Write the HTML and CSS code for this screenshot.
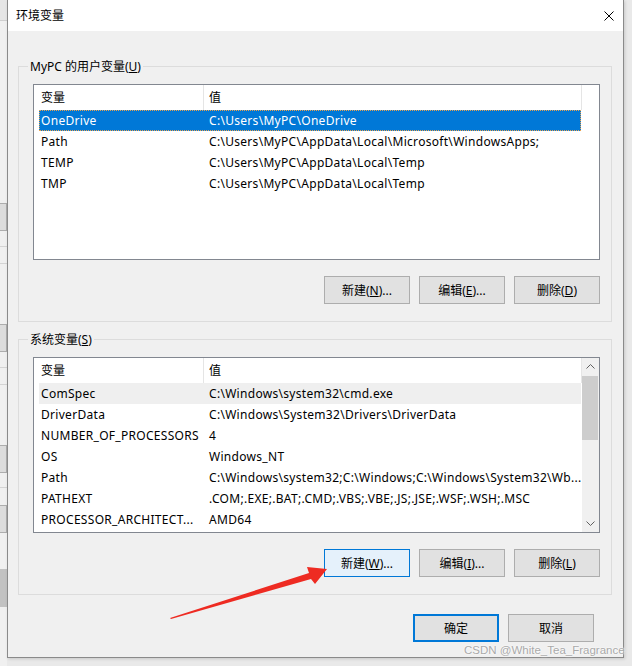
FILE: index.html
```html
<!DOCTYPE html>
<html lang="zh-CN">
<head>
<meta charset="utf-8">
<title>环境变量</title>
<link rel="stylesheet" href="styles.css">
</head>
<body>
<div class="desk">
  <div class="behind">
    <div class="bh-top"></div>
    <div class="bh-btn b1"></div>
    <div class="bh-line l1"></div>
    <div class="bh-line l2"></div>
    <div class="bh-btn b2"></div>
    <div class="bh-line l3"></div>
    <div class="bh-line l4"></div>
    <div class="bh-btn b3"></div>
    <div class="bh-line l5"></div>
    <div class="bh-btn b4"></div>
    <div class="bh-dark"></div>
  </div>

  <div class="dialog">
    <div class="titlebar">
      <span class="title">环境变量</span>
      <svg class="close" width="10" height="10" viewBox="0 0 10 10"><path d="M0.5 0.5L9.5 9.5M9.5 0.5L0.5 9.5" stroke="#000" stroke-width="1" fill="none"/></svg>
    </div>
    <div class="body">
      <div class="group">
        <span class="legend">MyPC 的用户变量(<u>U</u>)</span>
        <div class="list">
          <div class="list-main">
            <div class="head"><div class="hc c1">变量</div><div class="hc c2">值</div></div>
            <div class="row selected"><div class="cell c1">OneDrive</div><div class="cell c2">C:\Users\MyPC\OneDrive</div></div>
            <div class="row"><div class="cell c1">Path</div><div class="cell c2">C:\Users\MyPC\AppData\Local\Microsoft\WindowsApps;</div></div>
            <div class="row"><div class="cell c1">TEMP</div><div class="cell c2">C:\Users\MyPC\AppData\Local\Temp</div></div>
            <div class="row"><div class="cell c1">TMP</div><div class="cell c2">C:\Users\MyPC\AppData\Local\Temp</div></div>
          </div>
        </div>
        <div class="btns">
          <div class="btn">新建(<u>N</u>)...</div>
          <div class="btn">编辑(<u>E</u>)...</div>
          <div class="btn">删除(<u>D</u>)</div>
        </div>
      </div>

      <div class="group g2">
        <span class="legend">系统变量(<u>S</u>)</span>
        <div class="list">
          <div class="list-main">
            <div class="head"><div class="hc c1">变量</div><div class="hc c2">值</div></div>
            <div class="row hover"><div class="cell c1">ComSpec</div><div class="cell c2">C:\Windows\system32\cmd.exe</div></div>
            <div class="row"><div class="cell c1">DriverData</div><div class="cell c2">C:\Windows\System32\Drivers\DriverData</div></div>
            <div class="row"><div class="cell c1">NUMBER_OF_PROCESSORS</div><div class="cell c2">4</div></div>
            <div class="row"><div class="cell c1">OS</div><div class="cell c2">Windows_NT</div></div>
            <div class="row"><div class="cell c1">Path</div><div class="cell c2">C:\Windows\system32;C:\Windows;C:\Windows\System32\Wb...</div></div>
            <div class="row"><div class="cell c1">PATHEXT</div><div class="cell c2">.COM;.EXE;.BAT;.CMD;.VBS;.VBE;.JS;.JSE;.WSF;.WSH;.MSC</div></div>
            <div class="row"><div class="cell c1">PROCESSOR_ARCHITECT...</div><div class="cell c2">AMD64</div></div>
          </div>
          <div class="scrollbar">
            <div class="sb-arrow"><svg width="9" height="5" viewBox="0 0 9 5"><path d="M0.5 4.5L4.5 0.5L8.5 4.5" stroke="#606060" fill="none"/></svg></div>
            <div class="sb-thumb"></div>
            <div class="sb-space"></div>
            <div class="sb-arrow"><svg width="9" height="5" viewBox="0 0 9 5"><path d="M0.5 0.5L4.5 4.5L8.5 0.5" stroke="#606060" fill="none"/></svg></div>
          </div>
        </div>
        <div class="btns">
          <div class="btn focus">新建(<u>W</u>)...</div>
          <div class="btn">编辑(<u>I</u>)...</div>
          <div class="btn">删除(<u>L</u>)</div>
        </div>
      </div>

      <div class="footer">
        <div class="btn default">确定</div>
        <div class="btn">取消</div>
      </div>
    </div>
  </div>

  <svg class="arrow" width="632" height="666" viewBox="0 0 632 666">
    <polygon points="170,618 309,573 307,567 327,569 315,584 311,579 171,619" fill="#ee2b22"/>
  </svg>
  <div class="watermark">CSDN @White_Tea_Fragrance</div>
</div>
</body>
</html>
```
FILE: styles.css
```css
* { box-sizing: border-box; }
html, body { margin: 0; padding: 0; }
body {
  font-family: "Noto Sans", "Noto Sans CJK SC", sans-serif;
  font-size: 12px;
  color: #000;
  background: #ececec;
}
u { text-decoration: underline; text-underline-offset: 1px; }

.desk {
  position: relative;
  width: 632px;
  height: 666px;
  overflow: hidden;
  background: #e9e9e9;
  padding-left: 7px;
}

/* window behind, visible in the left strip */
.behind {
  position: absolute;
  left: 0; top: 0;
  width: 7px; height: 666px;
  background: #f0f0f0;
}
.bh-top { position: absolute; left: 0; top: 0; width: 7px; height: 21px; background: #e6e6e6; border-bottom: 1px solid #cfcfcf; }
.bh-btn { position: absolute; left: 0; width: 7px; height: 28px; background: #dcdcdc; border: 1px solid #adadad; border-left: none; }
.b1 { top: 203px; } .b2 { top: 324px; } .b3 { top: 445px; } .b4 { top: 505px; }
.bh-line { position: absolute; left: 0; width: 7px; height: 1px; background: #d4d4d4; }
.l1 { top: 246px; } .l2 { top: 263px; } .l3 { top: 367px; } .l4 { top: 384px; } .l5 { top: 487px; }
.bh-dark { position: absolute; left: 0; top: 569px; width: 7px; height: 38px; background: #c2c2c2; }

.dialog {
  position: relative;
  width: 617px;
  height: 658px;
  background: #f0f0f0;
  border: 1px solid #8a8a8a;
  border-top: none;
  box-shadow: 1px 1px 3px rgba(0,0,0,0.15);
}

.titlebar {
  height: 31px;
  background: #fff;
  display: flex;
  align-items: center;
  justify-content: space-between;
  padding: 0 9px 0 8px;
}
.title { font-family: "Noto Sans CJK SC", sans-serif; font-size: 12px; line-height: 16px; margin-top: -1px; }
.close { display: block; }

.body {
  padding: 35px 11px 0 10px;
}

.group {
  position: relative;
  width: 594px;
  border: 1px solid #dcdcdc;
  padding: 17px 11px 17px 14px;
}
.g2 { margin-top: 17px; }
.legend {
  position: absolute;
  left: 9px;
  top: -8px;
  line-height: 16px;
  padding: 0 2px;
  background: #f0f0f0;
}

.list {
  width: 567px;
  height: 176px;
  border: 1px solid #828790;
  background: #fff;
  display: flex;
}
.list-main { flex: 1; overflow: hidden; }

.head {
  display: grid;
  grid-template-columns: 170px 378px;
  height: 25px;
}
.hc {
  line-height: 25px;
  border-right: 1px solid #e5e5e5;
  white-space: nowrap;
}
.hc.c1 { padding-left: 7px; }
.hc.c2 { padding-left: 5px; }

.row {
  display: grid;
  grid-template-columns: 164px 378px;
  margin-left: 5px;
  width: 542px;
  height: 21px;
  line-height: 21px;
}
.cell { white-space: nowrap; overflow: hidden; letter-spacing: 0.3px; }
.cell.c1 { padding-left: 2px; }
.cell.c2 { padding-left: 6px; }
.row.selected {
  background: #0078d7;
  color: #fff;
  outline: 1px dotted #e9a24f;
  outline-offset: -1px;
}
.row.hover { background: #efefef; }

.scrollbar {
  width: 17px;
  background: #f0f0f0;
  display: flex;
  flex-direction: column;
}
.sb-arrow {
  height: 17px;
  display: flex;
  align-items: center;
  justify-content: center;
}
.sb-arrow svg { display: block; }
.sb-thumb {
  height: 64px;
  margin: 1px 1px 0 0;
  background: #cdcdcd;
}
.sb-space { flex: 1; }

.btns {
  display: flex;
  justify-content: flex-end;
  gap: 9px;
  margin-top: 16px;
}
.btn {
  width: 86px;
  height: 28px;
  border: 1px solid #adadad;
  background: #e1e1e1;
  display: flex;
  align-items: center;
  justify-content: center;
  white-space: nowrap;
}
.btn.focus { background: #e5f1fb; border-color: #0078d7; }
.btn.default { border: 2px solid #0078d7; }

.footer {
  display: flex;
  justify-content: flex-end;
  gap: 9px;
  margin-top: 19px;
  padding-right: 18px;
}

.arrow {
  position: absolute;
  left: 0; top: 0;
  pointer-events: none;
}
.watermark {
  position: absolute;
  left: 464px;
  top: 642px;
  font-family: "Liberation Sans", sans-serif;
  font-size: 11.5px;
  line-height: 16px;
  color: #a9a9a9;
  text-shadow: 0 0 2px #fff, 0 0 2px #fff;
  white-space: nowrap;
}
```
